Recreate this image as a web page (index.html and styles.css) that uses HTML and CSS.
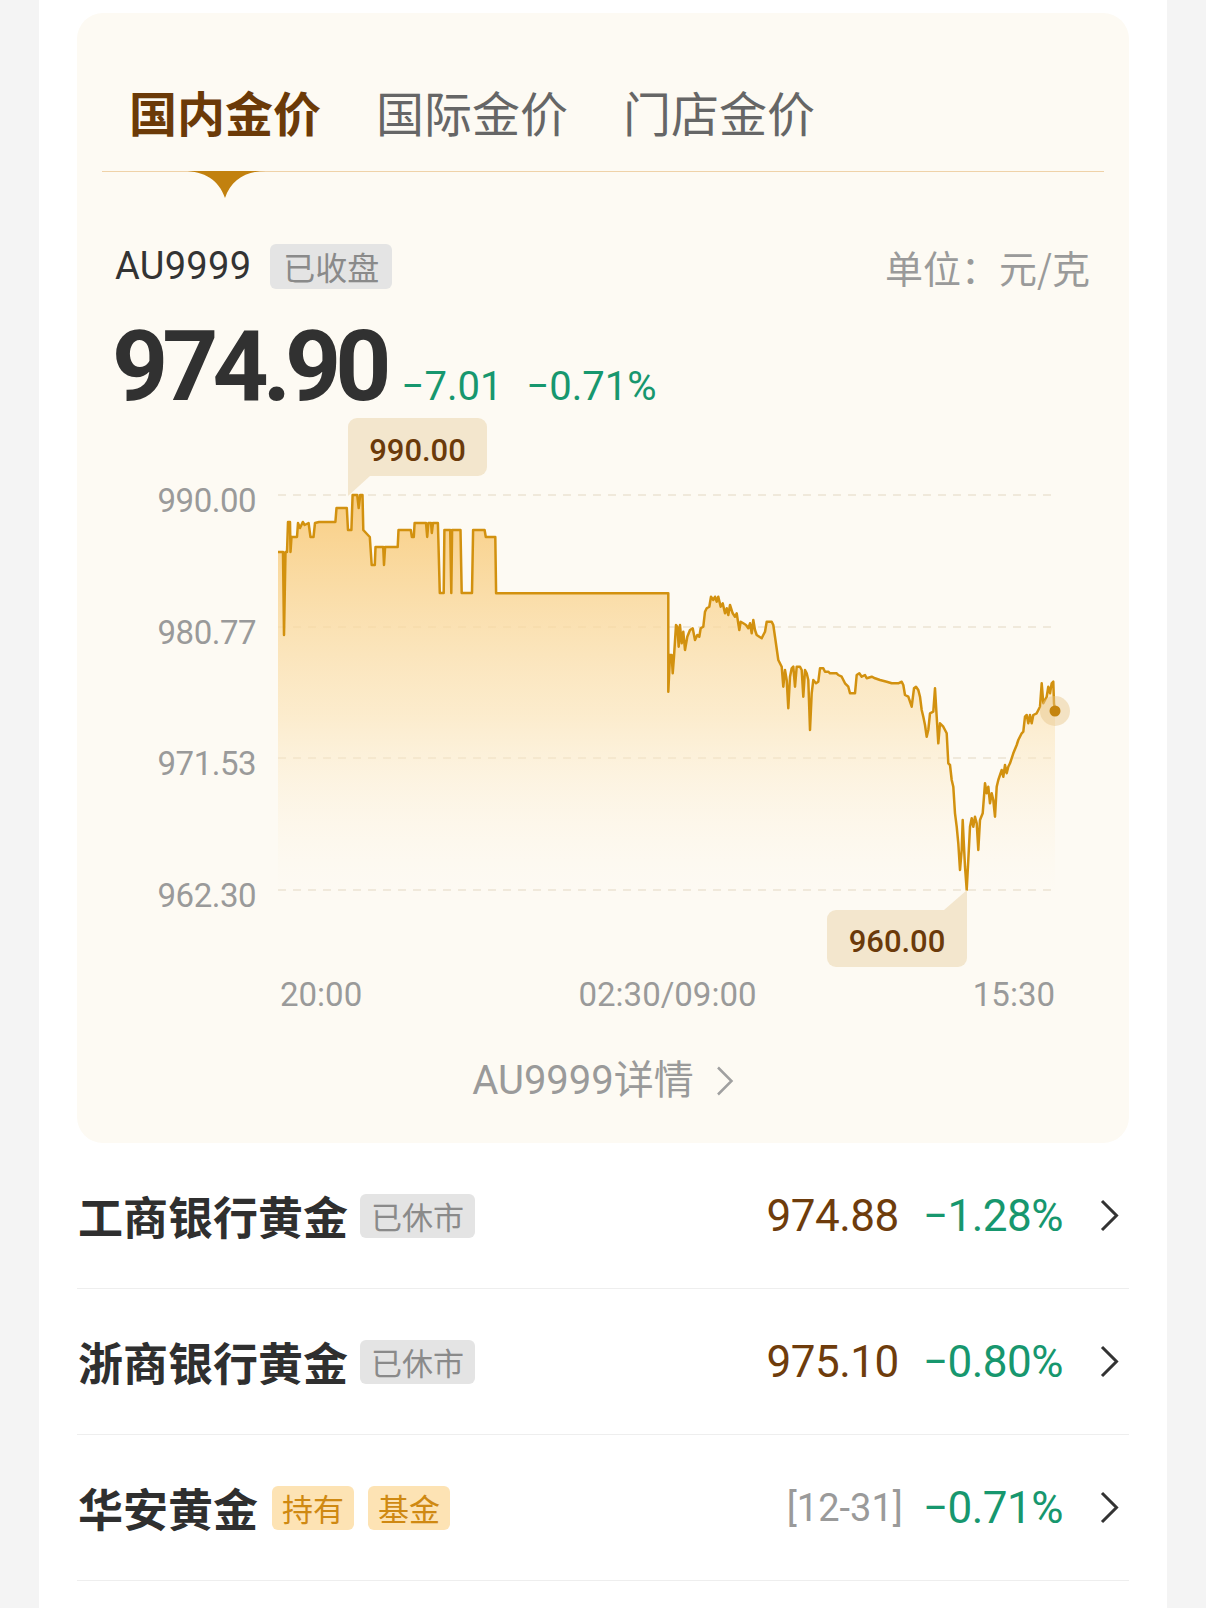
FILE: index.html
```html
<!DOCTYPE html>
<html lang="zh-CN">
<head>
<meta charset="utf-8">
<title>金价</title>
<link rel="stylesheet" href="styles.css">
</head>
<body>
<div class="page">
  <section class="card">
    <nav class="tabs">
      <div class="tab active">国内金价
        <svg class="tab-arrow" viewBox="0 0 82 27"><path d="M0 0H82C62 0 47 9 41 27C35 9 20 0 0 0Z"/></svg>
      </div>
      <div class="tab">国际金价</div>
      <div class="tab">门店金价</div>
    </nav>

    <div class="quote-head">
      <div class="quote-name">
        <span class="code">AU9999</span>
        <span class="badge grey big">已收盘</span>
      </div>
      <span class="unit">单位：元/克</span>
    </div>

    <div class="price-row">
      <span class="price">974.90</span>
      <span class="chg">−7.01</span>
      <span class="chg chg-pct">−0.71%</span>
    </div>

    <svg class="chart" viewBox="77 417 1052 558" width="1052" height="558">
      <defs>
        <linearGradient id="goldFill" x1="0" y1="495" x2="0" y2="895" gradientUnits="userSpaceOnUse">
          <stop offset="0" stop-color="#f8cb7c" stop-opacity="0.95"/>
          <stop offset="0.55" stop-color="#fbe2b3" stop-opacity="0.6"/>
          <stop offset="1" stop-color="#fdf4e2" stop-opacity="0"/>
        </linearGradient>
      </defs>
      <g class="grid">
        <line x1="278" y1="495" x2="1055" y2="495"/>
        <line x1="278" y1="627" x2="1055" y2="627"/>
        <line x1="278" y1="758" x2="1055" y2="758"/>
        <line x1="278" y1="890" x2="1055" y2="890"/>
      </g>
      <g class="ylab">
        <text x="256" y="512">990.00</text>
        <text x="256" y="644">980.77</text>
        <text x="256" y="775">971.53</text>
        <text x="256" y="907">962.30</text>
      </g>
      <path class="area" d="M278,552 L283,552 L284,635 L285.5,552 L287,552 L288,522 L290,522 L290.5,552 L291.5,537 L297,537 L298,523 L300,528 L302.8,522 L304.7,525 L308.6,523 L310.5,537 L313.5,537 L315,523 L319,522 L335.4,522 L336.5,508 L346.8,508 L348,530 L351.4,530 L352.6,495 L357.2,495 L358.7,508 L360.2,495 L362.5,495 L363.3,530 L367.9,535 L369.8,537 L371.7,565 L374.8,565 L375.5,547 L383.2,547 L384,565 L385.1,547 L397.7,547 L398.5,530 L410.8,530 L411.9,537 L413.8,537 L414.6,523 L426,523 L427.2,537 L428.4,523 L431,523 L431.8,533 L433,523 L437.9,523 L439.8,593 L443.7,593 L444.4,530 L450.2,530 L451.3,593 L452.1,530 L460.5,530 L461.7,593 L472,593 L473.1,530 L484.6,530 L485.8,537 L495.3,537 L496.1,593.3 L668.3,593.3 L668.3,691.7 L670,655 L671.7,655 L672.7,673.3 L674,656.7 L676,625 L677.3,626.7 L678.7,646.7 L680,625 L681.7,643.3 L683.3,631.7 L685,650 L687.3,636.7 L690,630 L692.7,628.3 L695,640 L697.3,635 L699.3,636.7 L700.7,628.3 L703.3,626.7 L705,611.7 L706.7,608.3 L709.3,606.7 L711,596.7 L713.3,600 L715,596.7 L716.7,601.7 L718.3,596.7 L720.7,606.7 L722.7,603.3 L725,613.3 L726.7,608.3 L728.3,615 L730,605 L732.7,613.3 L735,616.7 L736.7,613.3 L739.3,630 L740.7,621.7 L743.3,623.3 L746,625 L748.3,628.3 L750,623.3 L751.7,633.3 L753.3,620 L755,630 L756.7,635 L759.3,636.7 L761.7,638.3 L763.3,635 L765,631.7 L766.7,621.7 L771.7,621.7 L773.3,625 L775,636.7 L778.3,660 L781.7,666.7 L783.3,686.7 L785,670 L786.7,680 L788.3,708.3 L790,676.7 L791.7,668.3 L793.3,666.7 L795,686.7 L796.7,666.7 L800,666.7 L801.7,670 L803.3,696.7 L805,670 L806.7,673.3 L808.3,680 L810,730 L811.7,693.3 L813.3,680 L816,683.3 L818.3,681.7 L820,668.3 L823.3,668.3 L825,671.7 L828.3,671.7 L830,673.3 L836.7,673.3 L838.3,675 L841.7,676.7 L845,683.3 L848.3,686.7 L850,693.3 L855,693.3 L856.7,675 L859.3,673.3 L861.7,676.7 L865,675 L866.7,678.3 L871.7,676.7 L875,678.3 L880,680 L886.7,681.7 L891.7,683.3 L898.3,683.3 L901.7,681.7 L903.3,685 L905,695 L908.3,696.7 L911.7,706.7 L914,688.3 L916,686.7 L918.3,690 L920,696.7 L921.7,710 L923.3,716.7 L925,725 L926.7,736.7 L928.3,730 L930,713.3 L933.3,711.7 L935,688.3 L936.7,716.7 L938.3,743.3 L940,723.3 L943.3,726.7 L946.7,733.3 L948.3,763.3 L950,765 L951.7,780 L953.3,786.7 L955,813.3 L956.7,826.7 L958.3,843.3 L960,870 L961.7,850 L962.7,820 L964,846.7 L965,866.7 L966.7,890 L968.3,860 L970,826.7 L971.7,818.3 L973.3,826.7 L975,816.7 L976.7,823.3 L978.3,850 L980,820 L982.7,813.3 L985,783.3 L986.7,793.3 L988.3,786.7 L990,803.3 L991.7,793.3 L993.3,800 L995,816.7 L996.7,786.7 L998.3,780 L1001.7,770 L1003.3,776.7 L1005,765 L1006.7,773.3 L1008.3,766.7 L1010,763.3 L1013.3,753.3 L1016.7,745 L1018.3,740 L1021.7,733.3 L1023.3,731.7 L1025,716.7 L1026.7,715 L1028.3,723.3 L1030,715 L1031.7,723.3 L1033.3,715 L1036.7,713.3 L1040,706.7 L1041.7,683.3 L1043.3,703.3 L1045,700 L1046.7,696.7 L1048.3,686.7 L1050,693.3 L1051.7,683.3 L1053.3,681.7 L1054,703.3 L1055,710.7 L1055,895 L278,895 Z"/>
      <path class="line" d="M278,552 L283,552 L284,635 L285.5,552 L287,552 L288,522 L290,522 L290.5,552 L291.5,537 L297,537 L298,523 L300,528 L302.8,522 L304.7,525 L308.6,523 L310.5,537 L313.5,537 L315,523 L319,522 L335.4,522 L336.5,508 L346.8,508 L348,530 L351.4,530 L352.6,495 L357.2,495 L358.7,508 L360.2,495 L362.5,495 L363.3,530 L367.9,535 L369.8,537 L371.7,565 L374.8,565 L375.5,547 L383.2,547 L384,565 L385.1,547 L397.7,547 L398.5,530 L410.8,530 L411.9,537 L413.8,537 L414.6,523 L426,523 L427.2,537 L428.4,523 L431,523 L431.8,533 L433,523 L437.9,523 L439.8,593 L443.7,593 L444.4,530 L450.2,530 L451.3,593 L452.1,530 L460.5,530 L461.7,593 L472,593 L473.1,530 L484.6,530 L485.8,537 L495.3,537 L496.1,593.3 L668.3,593.3 L668.3,691.7 L670,655 L671.7,655 L672.7,673.3 L674,656.7 L676,625 L677.3,626.7 L678.7,646.7 L680,625 L681.7,643.3 L683.3,631.7 L685,650 L687.3,636.7 L690,630 L692.7,628.3 L695,640 L697.3,635 L699.3,636.7 L700.7,628.3 L703.3,626.7 L705,611.7 L706.7,608.3 L709.3,606.7 L711,596.7 L713.3,600 L715,596.7 L716.7,601.7 L718.3,596.7 L720.7,606.7 L722.7,603.3 L725,613.3 L726.7,608.3 L728.3,615 L730,605 L732.7,613.3 L735,616.7 L736.7,613.3 L739.3,630 L740.7,621.7 L743.3,623.3 L746,625 L748.3,628.3 L750,623.3 L751.7,633.3 L753.3,620 L755,630 L756.7,635 L759.3,636.7 L761.7,638.3 L763.3,635 L765,631.7 L766.7,621.7 L771.7,621.7 L773.3,625 L775,636.7 L778.3,660 L781.7,666.7 L783.3,686.7 L785,670 L786.7,680 L788.3,708.3 L790,676.7 L791.7,668.3 L793.3,666.7 L795,686.7 L796.7,666.7 L800,666.7 L801.7,670 L803.3,696.7 L805,670 L806.7,673.3 L808.3,680 L810,730 L811.7,693.3 L813.3,680 L816,683.3 L818.3,681.7 L820,668.3 L823.3,668.3 L825,671.7 L828.3,671.7 L830,673.3 L836.7,673.3 L838.3,675 L841.7,676.7 L845,683.3 L848.3,686.7 L850,693.3 L855,693.3 L856.7,675 L859.3,673.3 L861.7,676.7 L865,675 L866.7,678.3 L871.7,676.7 L875,678.3 L880,680 L886.7,681.7 L891.7,683.3 L898.3,683.3 L901.7,681.7 L903.3,685 L905,695 L908.3,696.7 L911.7,706.7 L914,688.3 L916,686.7 L918.3,690 L920,696.7 L921.7,710 L923.3,716.7 L925,725 L926.7,736.7 L928.3,730 L930,713.3 L933.3,711.7 L935,688.3 L936.7,716.7 L938.3,743.3 L940,723.3 L943.3,726.7 L946.7,733.3 L948.3,763.3 L950,765 L951.7,780 L953.3,786.7 L955,813.3 L956.7,826.7 L958.3,843.3 L960,870 L961.7,850 L962.7,820 L964,846.7 L965,866.7 L966.7,890 L968.3,860 L970,826.7 L971.7,818.3 L973.3,826.7 L975,816.7 L976.7,823.3 L978.3,850 L980,820 L982.7,813.3 L985,783.3 L986.7,793.3 L988.3,786.7 L990,803.3 L991.7,793.3 L993.3,800 L995,816.7 L996.7,786.7 L998.3,780 L1001.7,770 L1003.3,776.7 L1005,765 L1006.7,773.3 L1008.3,766.7 L1010,763.3 L1013.3,753.3 L1016.7,745 L1018.3,740 L1021.7,733.3 L1023.3,731.7 L1025,716.7 L1026.7,715 L1028.3,723.3 L1030,715 L1031.7,723.3 L1033.3,715 L1036.7,713.3 L1040,706.7 L1041.7,683.3 L1043.3,703.3 L1045,700 L1046.7,696.7 L1048.3,686.7 L1050,693.3 L1051.7,683.3 L1053.3,681.7 L1054,703.3 L1055,710.7"/>
      <circle class="halo" cx="1055" cy="711" r="15"/>
      <circle class="dot" cx="1055" cy="711" r="5.5"/>

      <g class="tip">
        <rect x="348" y="418" width="139" height="58" rx="9"/>
        <polygon points="348,462 370,476 348,496"/>
        <text x="417.5" y="461">990.00</text>
      </g>
      <g class="tip">
        <rect x="827" y="910" width="140" height="57" rx="9"/>
        <polygon points="967,890 967,926 944,910"/>
        <text x="897" y="952">960.00</text>
      </g>
    </svg>

    <div class="xaxis">
      <span>20:00</span>
      <span>02:30/09:00</span>
      <span>15:30</span>
    </div>

    <a class="detail">
      <span>AU9999详情</span>
      <svg class="detail-arrow" viewBox="0 0 18 30" width="18" height="30"><polyline points="2,1.5 15.5,15 2,28.5"/></svg>
    </a>
  </section>

  <ul class="list">
    <li class="row">
      <div class="row-left">
        <span class="name">工商银行黄金</span>
        <span class="badge grey">已休市</span>
      </div>
      <div class="row-right">
        <span class="val">974.88</span>
        <span class="pct">−1.28%</span>
        <svg class="chev" viewBox="0 0 19 33" width="19" height="33"><polyline points="2,2 16.5,16.5 2,31"/></svg>
      </div>
    </li>
    <li class="row">
      <div class="row-left">
        <span class="name">浙商银行黄金</span>
        <span class="badge grey">已休市</span>
      </div>
      <div class="row-right">
        <span class="val">975.10</span>
        <span class="pct">−0.80%</span>
        <svg class="chev" viewBox="0 0 19 33" width="19" height="33"><polyline points="2,2 16.5,16.5 2,31"/></svg>
      </div>
    </li>
    <li class="row">
      <div class="row-left">
        <span class="name">华安黄金</span>
        <span class="badge gold">持有</span>
        <span class="badge gold">基金</span>
      </div>
      <div class="row-right">
        <span class="date">[12-31]</span>
        <span class="pct">−0.71%</span>
        <svg class="chev" viewBox="0 0 19 33" width="19" height="33"><polyline points="2,2 16.5,16.5 2,31"/></svg>
      </div>
    </li>
  </ul>
</div>
</body>
</html>
```

FILE: styles.css
```css
* { box-sizing: border-box; }

html, body {
  margin: 0;
  padding: 0;
  background: #f4f4f4;
}

body {
  font-family: Roboto, "Noto Sans CJK SC", sans-serif;
  color: #333;
}

.page {
  margin: 0 39px;
  min-height: 1608px;
  background: #ffffff;
  padding: 13px 38px 0;
}

/* ---------- card ---------- */
.card {
  background: #fdfaf3;
  border-radius: 26px;
  padding-bottom: 40px;
}

.tabs {
  display: flex;
  gap: 55px;
  margin: 0 25px;
  padding-left: 27px;
  border-bottom: 1px solid #efd2a8;
}

.tab {
  position: relative;
  padding: 74px 0 36px;
  font-family: "Noto Sans CJK SC", sans-serif;
  font-size: 48px;
  line-height: 48px;
  color: #666;
  font-weight: 400;
}

.tab.active {
  color: #6b3a08;
  font-weight: 700;
}

.tab-arrow {
  position: absolute;
  top: 100%;
  left: 50%;
  width: 82px;
  height: 27px;
  transform: translateX(-50%);
  fill: #c2810f;
}

.quote-head {
  margin-top: 72px;
  padding: 0 39px 0 38px;
  height: 45px;
  display: flex;
  align-items: center;
  justify-content: space-between;
}

.quote-name {
  display: flex;
  align-items: center;
}

.code {
  font-family: Roboto, sans-serif;
  font-size: 38px;
  line-height: 45px;
  color: #333;
  letter-spacing: 0.3px;
}

.badge {
  display: inline-block;
  font-family: "Noto Sans CJK SC", sans-serif;
  border-radius: 6px;
  text-align: center;
}

.badge.grey {
  background: #e4e4e4;
  color: #8a8a8a;
}

.badge.big {
  margin-left: 19px;
  height: 45px;
  line-height: 45px;
  padding: 0 13px;
  font-size: 32px;
}

.unit {
  font-family: "Noto Sans CJK SC", sans-serif;
  font-size: 38px;
  line-height: 45px;
  color: #9a9a9a;
}

.price-row {
  margin-top: 28px;
  margin-left: -3px;
  padding-left: 38px;
  display: flex;
  align-items: baseline;
  height: 100px;
}

.price {
  font-family: Roboto, sans-serif;
  font-weight: 700;
  font-size: 98px;
  line-height: 100px;
  letter-spacing: -6px;
  color: #313131;
}

.chg {
  font-family: Roboto, sans-serif;
  font-size: 40px;
  line-height: 44px;
  color: #17976e;
  margin-left: 16px;
}

.chg.chg-pct {
  margin-left: 24px;
}

/* ---------- chart ---------- */
.chart {
  display: block;
  width: 1052px;
  height: 558px;
}

.grid line {
  stroke: #ebe3d3;
  stroke-width: 1.5;
  stroke-dasharray: 8 7;
}

.ylab text {
  font-family: Roboto, sans-serif;
  font-size: 33px;
  letter-spacing: -0.5px;
  fill: #9a9a9a;
  text-anchor: end;
}

.area {
  fill: url(#goldFill);
  stroke: none;
}

.line {
  fill: none;
  stroke: #d2910f;
  stroke-width: 2.5;
  stroke-linejoin: round;
}

.halo {
  fill: #e6c589;
  fill-opacity: 0.45;
}

.dot {
  fill: #c4840f;
}

.tip rect,
.tip polygon {
  fill: #f3e6cd;
}

.tip text {
  font-family: Roboto, sans-serif;
  font-weight: 500;
  font-size: 31px;
  fill: #6b3a0a;
  text-anchor: middle;
}

.xaxis {
  display: flex;
  justify-content: space-between;
  padding: 0 74px 0 203px;
  height: 40px;
  font-family: Roboto, sans-serif;
  font-size: 33px;
  line-height: 40px;
  color: #9a9a9a;
}

.detail {
  margin-top: 44px;
  display: flex;
  justify-content: center;
  align-items: center;
  gap: 22px;
  height: 44px;
  font-family: Roboto, "Noto Sans CJK SC", sans-serif;
  font-size: 40px;
  line-height: 44px;
  color: #9a9a9a;
}

.detail-arrow polyline {
  fill: none;
  stroke: #a0a0a0;
  stroke-width: 2.5;
}

/* ---------- list ---------- */
.list {
  list-style: none;
  margin: 0;
  padding: 0;
}

.row {
  display: flex;
  align-items: center;
  justify-content: space-between;
  height: 146px;
  border-bottom: 1px solid #eeeeee;
  padding-right: 10px;
}

.row-left {
  display: flex;
  align-items: center;
  padding-left: 1px;
}

.name {
  font-family: "Noto Sans CJK SC", sans-serif;
  font-weight: 700;
  font-size: 45px;
  line-height: 50px;
  color: #2f2f2f;
  margin-right: 12px;
}

.row-left .badge {
  height: 44px;
  line-height: 44px;
  font-size: 31px;
  padding: 0 11px;
}

.badge.gold {
  background: #fde3b4;
  color: #cf8912;
  padding: 0 10px;
  margin-left: 2px;
}

.badge.gold + .badge.gold {
  margin-left: 14px;
}

.row-right {
  display: flex;
  align-items: center;
}

.val {
  font-family: Roboto, sans-serif;
  font-size: 44px;
  line-height: 50px;
  color: #6e3c0c;
  letter-spacing: -0.5px;
}

.pct {
  font-family: Roboto, sans-serif;
  font-size: 44px;
  line-height: 50px;
  color: #17976e;
  margin-left: 24px;
  letter-spacing: -0.5px;
}

.date {
  font-family: Roboto, sans-serif;
  font-size: 38px;
  line-height: 50px;
  color: #9a9a9a;
}

.date + .pct {
  margin-left: 20px;
}

.chev {
  margin-left: 37px;
}

.chev polyline {
  fill: none;
  stroke: #333;
  stroke-width: 3;
}
```
